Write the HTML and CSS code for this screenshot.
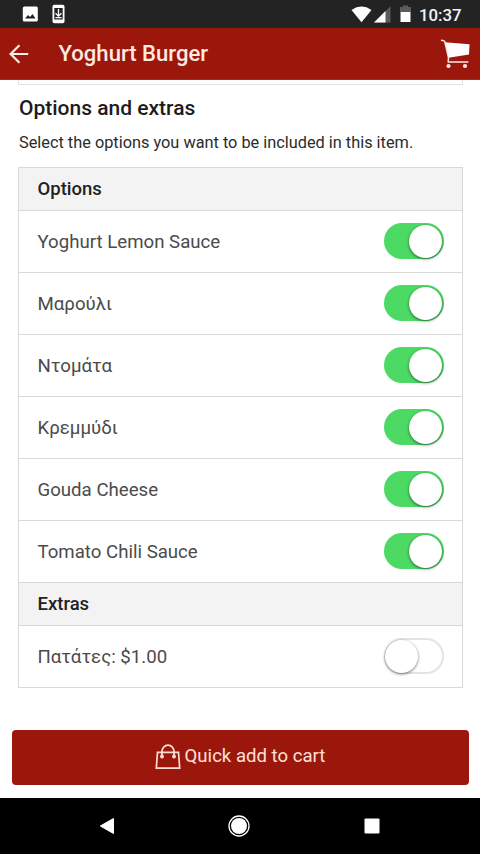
FILE: index.html
```html
<!DOCTYPE html>
<html lang="en">
<head>
<meta charset="utf-8">
<title>Yoghurt Burger</title>
<link rel="stylesheet" href="styles.css">
</head>
<body>
<div class="status">
  <svg class="status-picture" width="16" height="16" viewBox="0 0 16 16"><rect x=".8" y=".5" width="15" height="15" rx="1.500" fill="#fff"/><path d="M3 12.500 6 9 8 11 10.500 8 13.500 12.500z" fill="#232323"/></svg>
  <svg class="status-phone" width="13" height="20" viewBox="0 0 13 20"><rect x=".5" y=".8" width="12" height="18.400" rx="1.800" fill="#fff"/><rect x="2.300" y="4" width="8.400" height="11.500" fill="#232323"/><path d="M6.500 5v7M3.500 9.200l3 3 3-3M3.500 13.700h6" stroke="#fff" stroke-width="1.300" fill="none"/></svg>
  <svg class="status-wifi" width="21" height="17" viewBox="0 0 21 17"><path d="M.5 4Q10.500-2.800 20.500 4L10.500 16.300z" fill="#fff"/></svg>
  <svg class="status-signal" width="17" height="17" viewBox="0 0 17 17"><path d="M0 16.500 16.500.300V16.500z" fill="#5b5b5b"/><path d="M0 16.500 11.500 5V16.500z" fill="#fff"/></svg>
  <svg class="status-battery" width="11" height="18" viewBox="0 0 11 18"><path d="M0 2h3V.500h5V2h3v5H0z" fill="#5b5b5b"/><path d="M.5 7h10v10H.5z" fill="#fff"/></svg>
  <span class="clock">10:37</span>
</div>
<header class="appbar">
  <svg class="back" width="20" height="20" viewBox="0 0 20 20"><path d="M19.200 10H1.500M10.400 1.300 1.600 10l8.800 8.700" fill="none" stroke="#ffeee8" stroke-width="2.200"/></svg>
  <h1>Yoghurt Burger</h1>
  <svg class="cart" width="30" height="30" viewBox="0 0 30 30"><path d="M5 3.300 29.500 5.300 29 15.500 8.500 18.700z" fill="#fff"/><path d="M1.500 1.200 4.600 2.100 8.500 18.500 8.200 23H27.800" fill="none" stroke="#ffe9e2" stroke-width="1.500" stroke-linejoin="round" stroke-linecap="round"/><circle cx="8.500" cy="27" r="2.100" fill="#ffe9e2"/><circle cx="25" cy="27" r="2.100" fill="#ffe9e2"/></svg>
</header>
<main>
  <div class="previous"></div>
  <h2>Options and extras</h2>
  <p class="intro">Select the options you want to be included in this item.</p>
  <section class="list">
    <h3>Options</h3>
    <div class="row"><span>Yoghurt Lemon Sauce</span><i class="toggle on"></i></div>
    <div class="row"><span>Μαρούλι</span><i class="toggle on"></i></div>
    <div class="row"><span>Ντομάτα</span><i class="toggle on"></i></div>
    <div class="row"><span>Κρεμμύδι</span><i class="toggle on"></i></div>
    <div class="row"><span>Gouda Cheese</span><i class="toggle on"></i></div>
    <div class="row"><span>Tomato Chili Sauce</span><i class="toggle on"></i></div>
    <h3>Extras</h3>
    <div class="row"><span>Πατάτες: $1.00</span><i class="toggle"></i></div>
  </section>
  <button class="add">
    <svg width="26" height="26" viewBox="0 0 26 26" fill="none" stroke="#ffddd2" stroke-width="1.700"><path d="M2.500 8.300h21L24.700 24.200H1.300zM7 12.500V7.500a6 6.300 0 0 1 12 0v5"/><circle cx="7" cy="12.500" r="1.100" fill="#ffddd2"/><circle cx="19" cy="12.500" r="1.100" fill="#ffddd2"/></svg>
    <span>Quick add to cart</span>
  </button>
</main>
<nav class="navbar">
  <svg width="16" height="18" viewBox="0 0 16 18"><path d="M1.300 9 14.500 1.500v15z" fill="#fff" stroke="#fff" stroke-linejoin="round"/></svg>
  <svg width="22" height="22" viewBox="0 0 22 22"><circle cx="11" cy="11" r="10" fill="none" stroke="#fff" stroke-width="1.300"/><circle cx="11" cy="11" r="8" fill="#fff"/></svg>
  <svg width="16" height="16" viewBox="0 0 16 16"><rect x=".5" y=".5" width="15" height="15" rx="1" fill="#fff"/></svg>
</nav>
</body>
</html>
```
FILE: styles.css
```css
* { box-sizing: border-box; }
body {
  margin: 0;
  width: 480px;
  height: 854px;
  overflow: hidden;
  display: flex;
  flex-direction: column;
  background: #fff;
  font-family: Roboto, "Noto Sans", sans-serif;
}
svg { display: block; flex: none; }
h1, h2, h3, p { margin: 0; }
.status {
  display: flex;
  align-items: center;
  height: 28px;
  padding-left: 22px;
  background: #232323;
  flex: none;
}
.status-phone { margin-left: 14px; }
.status-wifi { margin-left: 286px; }
.status-signal { margin-left: 2px; }
.status-battery { margin-left: 9px; }
.clock {
  margin-left: 8px;
  padding-top: 1px;
  font-size: 16.800px;
  line-height: 26px;
  font-weight: 500;
  color: #f4f4f4;
}
.appbar {
  display: flex;
  align-items: center;
  height: 52px;
  padding: 0 10px 0 9px;
  background: #9b170b;
  border-bottom: 1px solid #86392f;
  flex: none;
}
.appbar h1 {
  margin-left: 29.500px;
  padding-bottom: 2px;
  font-size: 22.100px;
  line-height: 28px;
  font-weight: 500;
  color: #ffe9e1;
}
.cart { margin-left: auto; }
main { flex: none; height: 718px; padding: 0 11px; }
.previous {
  height: 5px;
  margin: 0 6px 0 7px;
  border: 1px solid #e8dfdf;
  border-top: 0;
}
h2 {
  margin: 9px 0 0 8px;
  font-size: 21px;
  line-height: 28px;
  font-weight: 500;
  color: #1c1c1c;
}
.intro {
  margin: 10px 0 0 8px;
  font-size: 16.320px;
  line-height: 22px;
  color: #2b2b2b;
  white-space: nowrap;
}
.list {
  margin: 13px 6px 0 7px;
  border: solid #d9d9d9;
  border-width: 1px 1px 0;
}
h3 {
  height: 43px;
  padding-left: 18.500px;
  background: #f3f3f3;
  border-bottom: 1px solid #d9d9d9;
  font-size: 18.500px;
  line-height: 42px;
  font-weight: 500;
  color: #222;
}
.row {
  display: flex;
  align-items: center;
  justify-content: space-between;
  height: 62px;
  padding: 0 18.500px 1px;
  border-bottom: 1px solid #d9d9d9;
  font-size: 18.650px;
  color: #4b4b4b;
}
.row span { padding-top: 1px; }
.toggle {
  display: flex;
  align-items: center;
  width: 60px;
  height: 36px;
  padding: 0 2px;
  border-radius: 18px;
  box-shadow: inset 0 0 0 2px #e4e4e4;
}
.toggle::before {
  content: "";
  width: 33px;
  height: 33px;
  border-radius: 50%;
  background: #fff;
  box-shadow: 0 1px 3px rgba(0, 0, 0, .55);
}
.toggle:not(.on) { padding-left: 1px; }
.toggle.on {
  justify-content: flex-end;
  background: #4cd964;
  box-shadow: none;
}
.add {
  display: flex;
  align-items: center;
  justify-content: center;
  gap: 4px;
  width: 457px;
  height: 55px;
  margin: 42px 0 0 1px;
  padding: 0 1px 0 0;
  border: 0;
  border-radius: 4px;
  background: #9b170b;
  font: 18.600px/24px Roboto, sans-serif;
  color: #ffe0d6;
}
.add svg { margin-bottom: 2px; }
.add span { padding-bottom: 3px; }
.navbar {
  display: flex;
  align-items: center;
  height: 56px;
  padding-left: 99px;
  background: #000;
}
.navbar svg:nth-child(2) { margin: 0 113.500px 0 113px; }
```
